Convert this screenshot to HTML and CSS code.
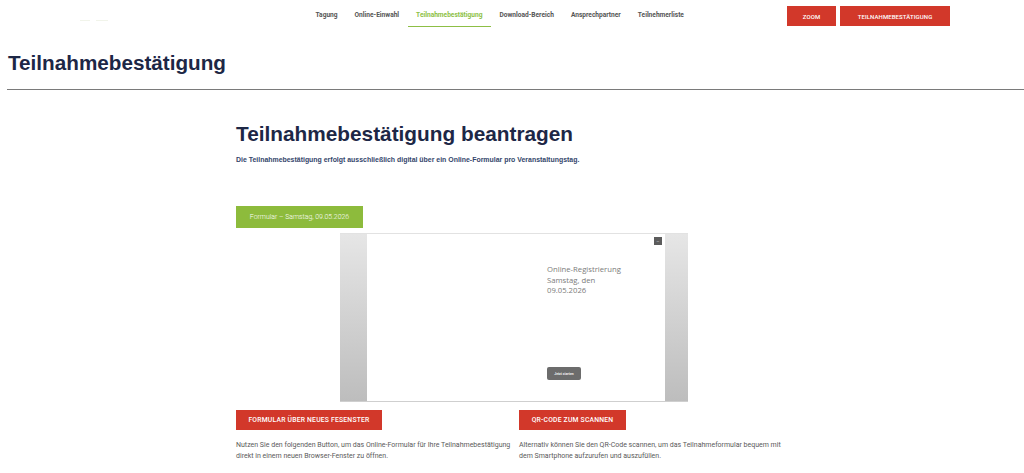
FILE: index.html
```html
<!DOCTYPE html>
<html lang="de">
<head>
<meta charset="utf-8">
<title>Teilnahmebestätigung</title>
<link rel="stylesheet" href="styles.css">
</head>
<body>
<header class="site-header">
  <div class="logo"><span class="logo-mark"></span><span class="logo-mark short"></span></div>
  <nav class="main-nav">
    <a class="nav-item" href="#">Tagung</a>
    <a class="nav-item" href="#">Online-Einwahl</a>
    <a class="nav-item active" href="#">Teilnahmebestätigung</a>
    <a class="nav-item" href="#">Download-Bereich</a>
    <a class="nav-item" href="#">Ansprechpartner</a>
    <a class="nav-item" href="#">Teilnehmerliste</a>
  </nav>
  <div class="header-actions">
    <a class="btn btn-red btn-zoom" href="#">ZOOM</a>
    <a class="btn btn-red btn-cert" href="#">TEILNAHMEBESTÄTIGUNG</a>
  </div>
</header>

<section class="page-title">
  <h1>Teilnahmebestätigung</h1>
</section>
<hr class="title-rule">

<main class="content">
  <h2>Teilnahmebestätigung beantragen</h2>
  <p class="lead">Die Teilnahmebestätigung erfolgt ausschließlich digital über ein Online-Formular pro Veranstaltungstag.</p>

  <div class="tab">Formular – Samstag, 09.05.2026</div>

  <div class="embed">
    <div class="embed-side"></div>
    <div class="embed-main">
      <span class="embed-close">–</span>
      <div class="embed-text">
        <div>Online-Registrierung</div>
        <div>Samstag, den</div>
        <div>09.05.2026</div>
      </div>
      <span class="embed-start">Jetzt starten</span>
    </div>
    <div class="embed-side right"></div>
  </div>

  <div class="columns">
    <div class="col">
      <a class="btn btn-red btn-wide" href="#">FORMULAR ÜBER NEUES FESENSTER</a>
      <p class="col-text">Nutzen Sie den folgenden Button, um das Online-Formular für Ihre Teilnahmebestätigung direkt in einem neuen Browser-Fenster zu öffnen.</p>
    </div>
    <div class="col">
      <a class="btn btn-red btn-qr" href="#">QR-CODE ZUM SCANNEN</a>
      <p class="col-text">Alternativ können Sie den QR-Code scannen, um das Teilnahmeformular bequem mit dem Smartphone aufzurufen und auszufüllen.</p>
    </div>
  </div>
</main>
</body>
</html>
```

FILE: styles.css
```css
* { box-sizing: border-box; }

body {
  margin: 0;
  background: #ffffff;
  font-family: Roboto, "Liberation Sans", Arial, sans-serif;
  color: #555555;
}

a { text-decoration: none; }

/* Header */
.site-header {
  display: flex;
  align-items: flex-start;
  height: 32px;
  padding-right: 74px;
}

.logo {
  width: 307px;
  padding: 20px 0 0 80px;
  display: flex;
  gap: 6px;
}

.logo-mark {
  display: block;
  width: 10px;
  height: 1px;
  background: #f1f4ea;
}
.logo-mark.short { width: 12px; }

.main-nav {
  display: flex;
  padding-top: 11px;
}

.nav-item {
  display: block;
  padding: 0 8.5px 6px;
  font-size: 6.6px;
  font-weight: 700;
  color: #555555;
  line-height: 9px;
  border-bottom: 1.5px solid transparent;
}

.nav-item.active {
  color: #8dbf45;
  border-bottom-color: #8dbf45;
}

.header-actions {
  margin-left: auto;
  display: flex;
  gap: 4px;
  padding-top: 6px;
}

.btn {
  display: flex;
  align-items: center;
  justify-content: center;
  height: 20px;
  font-size: 6px;
  font-weight: 500;
  letter-spacing: 0.1px;
  color: #ffffff;
}

.btn-red { background: #d2382a; }
.btn-zoom { width: 49px; }
.btn-cert { width: 110px; }

/* Page title */
.page-title {
  padding: 18px 8px 0;
}

.page-title h1 {
  margin: 0;
  font-family: "Liberation Sans", Arial, sans-serif;
  font-size: 20.7px;
  line-height: 25px;
  font-weight: 700;
  color: #1d2746;
}

.title-rule {
  margin: 14px 0 0 7px;
  border: 0;
  border-top: 1px solid #7a7a7a;
  height: 0;
}

/* Content */
.content {
  width: 552px;
  margin: 0 auto;
  padding-top: 31px;
}

.content h2 {
  margin: 0;
  font-family: "Liberation Sans", Arial, sans-serif;
  font-size: 20.8px;
  line-height: 25px;
  font-weight: 700;
  color: #1d2746;
}

.lead {
  margin: 10px 0 0;
  font-family: "Liberation Sans", Arial, sans-serif;
  font-size: 6.95px;
  line-height: 8px;
  font-weight: 700;
  color: #34466b;
}

.tab {
  margin-top: 42px;
  width: 127px;
  height: 22px;
  display: flex;
  align-items: center;
  justify-content: center;
  background: #8dbb3c;
  color: #ffffff;
  font-size: 6.9px;
  font-weight: 300;
}

.embed {
  margin: 5px 0 0 104px;
  width: 348px;
  height: 169px;
  display: flex;
  border-top: 1px solid #e2e2e2;
  border-bottom: 1px solid #cfcfcf;
}

.embed-side {
  width: 27px;
  background: linear-gradient(to bottom, #e6e6e6, #bdbdbd);
}
.embed-side.right { width: 23px; }

.embed-main {
  flex: 1;
  position: relative;
  background: #ffffff;
  display: flex;
  flex-direction: column;
  padding: 30px 0 0 180px;
}

.embed-close {
  position: absolute;
  top: 3px;
  right: 3px;
  width: 8px;
  height: 8px;
  background: #5c5c5c;
  color: #cfcfcf;
  font-size: 5px;
  line-height: 8px;
  text-align: center;
}

.embed-text {
  font-family: "Open Sans", "DejaVu Sans", sans-serif;
  font-size: 7.7px;
  line-height: 10.5px;
  color: #7b7b7b;
}

.embed-start {
  margin-top: auto;
  margin-bottom: 21px;
  width: 34px;
  height: 13px;
  border-radius: 2px;
  background: #6c6c6c;
  color: #f0f0f0;
  font-size: 3.4px;
  font-weight: 700;
  display: flex;
  align-items: center;
  justify-content: center;
}

.columns {
  display: grid;
  grid-template-columns: 283px 1fr;
  margin-top: 8px;
}

.col { padding-right: 6px; }

.btn-wide { width: 146px; font-size: 6.8px; letter-spacing: 0.2px; }
.btn-qr { width: 107px; font-size: 6.8px; letter-spacing: 0.2px; }

.col-text {
  margin: 10px 0 0;
  font-size: 7px;
  line-height: 11px;
  color: #5a5a5a;
}
```
